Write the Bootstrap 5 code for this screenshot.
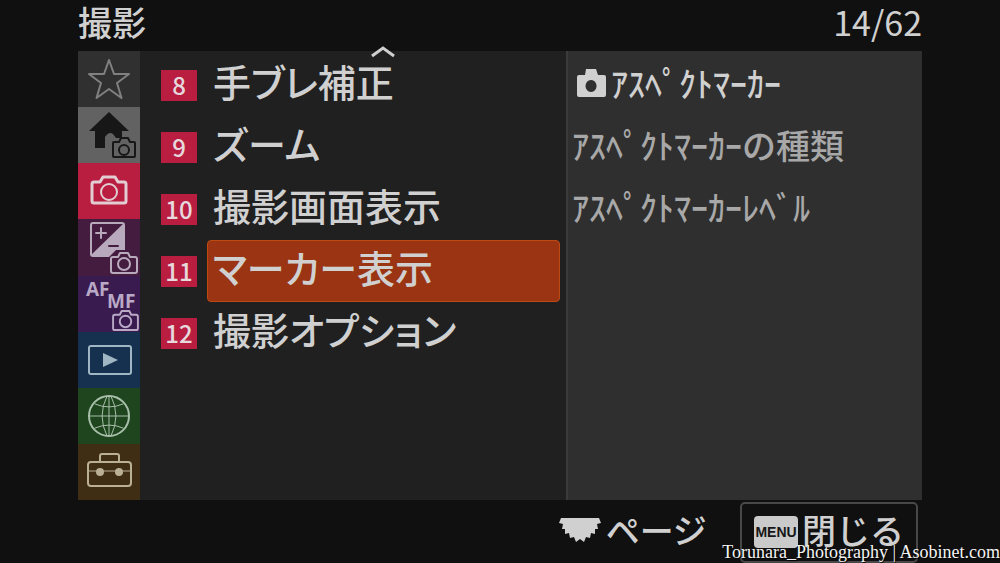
<!DOCTYPE html>
<html lang="ja">
<head>
<meta charset="utf-8">
<meta name="viewport" content="width=device-width, initial-scale=1">
<title>撮影</title>
<link href="https://cdn.jsdelivr.net/npm/bootstrap@5.3.0/dist/css/bootstrap.min.css" rel="stylesheet">
<style>
body{background:#101010;color:#d0d0d0;font-family:"Noto Sans CJK JP",sans-serif;line-height:1}
.frame{width:84.4%}
.topbar{height:51px;padding-bottom:8px}
.topbar h1,.pager{font-size:34px;line-height:44px}
.pane{background:#202020}
.tabs{width:62px}
.tabs a{flex:1 1 56px;color:#c3b5d0}
.tabs svg{width:62px;height:56px;fill:none;stroke:currentColor;stroke-width:2;stroke-linejoin:round;stroke-linecap:round}
.tabs text{font:700 19px "Open Sans",sans-serif;fill:currentColor;stroke:none}
.tabs .t-star{background:#303030;color:#808080}
.tabs .t-home{background:#626262;color:#171717}
.tabs .t-shoot{background:#b91e41;color:#e2cdd2}
.tabs .t-expo{background:#431c40;color:#b9a9bd}
.tabs .t-focus{background:#3a1b50;color:#b9a9c6}
.tabs .t-play{background:#16304f;color:#a0b6c2}
.tabs .t-net{background:#1f451f;color:#a8bfaa}
.tabs .t-setup{background:#3f2d14;color:#b9b096}
.groups{width:426px;padding:3px 6px 0 21px}
.group-row{height:62px;gap:10px}
.num{width:36px;height:31px;background:#b91e41;color:#e6d8dc;font-size:24px;font-weight:500;line-height:30px}
.entry{height:62px;padding:0 0 8px 5px;border:1px solid transparent;border-radius:4px;color:inherit;font-size:38px;font-weight:500;line-height:52px;font-feature-settings:"palt";background:none}
.entry.active{background:#9a3412;border-color:#bd4a12}
.scroll-up{top:-6px;left:66px;right:6px;height:14px}
.items{background:#2f2f2f;border-left:2px solid #3b3b3b;padding:3px 4px 0}
.item-row{height:62px;font-size:34px;font-weight:500;line-height:58px;padding-bottom:4px;color:#a8a8a8}
.item-row.on{color:#d0d0d0}
.foot{height:63px;font-size:34px;font-weight:500}
.foot .hint{padding:0 0 4px;line-height:44px;font-feature-settings:"palt"}
.close-btn{width:178px;height:61px;margin:1px 4px 0 34px;border:2px solid #484848;border-radius:5px;background:none;color:#d0d0d0;font-weight:500;line-height:40px}
.close-btn .label{padding-bottom:4px}
.menu-key{width:44px;height:32px;border-radius:4px;background:#cacaca;color:#161616;font:700 14px/32px "Liberation Sans",sans-serif}
.credit{right:0;bottom:1px;color:#f4f4f4;font:18px/20px "Liberation Serif",serif;text-shadow:1px 1px 1px #000}
</style>
</head>
<body class="min-vh-100 d-flex flex-column align-items-center position-relative">
<svg class="d-none" aria-hidden="true">
  <symbol id="cam" viewBox="0 0 38 30"><path stroke-width="3" d="M4 7H10L13 2H25L28 7H34Q36 7 36 9V26Q36 28 34 28H4Q2 28 2 26V9Q2 7 4 7Z"/><circle cx="19" cy="17" r="8"/></symbol>
  <symbol id="cam-s" viewBox="0 0 28 22"><path d="M3 5H8L10 1H18L20 5H25Q27 5 27 7V19Q27 21 25 21H3Q1 21 1 19V7Q1 5 3 5Z"/><circle cx="14" cy="12" r="6"/></symbol>
</svg>
<header class="frame topbar d-flex justify-content-between align-items-center">
  <h1 class="m-0 fw-medium">撮影</h1>
  <span class="pager">14/62</span>
</header>
<main class="frame d-flex flex-grow-1">
  <nav class="tabs d-flex flex-column flex-shrink-0" aria-label="メニュー">
    <a href="#" class="t-star" aria-label="マイメニュー"><svg viewBox="0 0 62 56"><path d="M31 9L36 23H51L39 32L43.500 47L31 38L18.500 47L23 32L11 23H26Z"/></svg></a>
    <a href="#" class="t-home" aria-label="メイン"><svg viewBox="0 0 62 56"><path d="M31 5L51 24H44V31H38L35 27Q31 24 27 30V41H17V24H11Z" fill="currentColor" stroke="none"/><path d="M36 35H41L43 31H50L52 35H56Q57 35 57 36V49Q57 50 56 50H36Q35 50 35 49V36Q35 35 36 35Z"/><circle cx="46" cy="43" r="5"/></svg></a>
    <a href="#" class="t-shoot" aria-label="撮影"><svg viewBox="0 0 62 56"><use href="#cam" x="12" y="12" width="38" height="30"/></svg></a>
    <a href="#" class="t-expo" aria-label="露出/色"><svg viewBox="0 0 62 56"><path d="M46 4L13 36H46Z" fill="currentColor" stroke="none"/><rect x="13" y="4" width="33" height="33" rx="2"/><path d="M18 14H28M23 9V19"/><path d="M31 27H40" stroke="#431c40"/><path d="M30 39L38 31H54L60 38V56H30Z" fill="#431c40" stroke="none"/><use href="#cam-s" x="32" y="33" width="28" height="22"/></svg></a>
    <a href="#" class="t-focus" aria-label="フォーカス"><svg viewBox="0 0 62 56"><text x="8" y="20">AF</text><text x="29" y="32">MF</text><use href="#cam-s" x="34" y="34" width="27" height="21"/></svg></a>
    <a href="#" class="t-play" aria-label="再生"><svg viewBox="0 0 62 56"><rect x="11" y="14" width="42" height="28" rx="2"/><path d="M25 21L40 28L25 35Z" fill="currentColor" stroke="none"/></svg></a>
    <a href="#" class="t-net" aria-label="ネットワーク"><svg viewBox="0 0 62 56"><circle cx="31" cy="28" r="20"/><path d="M31 8V48M11 28H51M17 16Q31 22 45 16M17 40Q31 34 45 40M29 8Q19 28 29 48M33 8Q43 28 33 48" stroke-width="1"/></svg></a>
    <a href="#" class="t-setup" aria-label="セットアップ"><svg viewBox="0 0 62 56"><rect x="10" y="18" width="43" height="24" rx="3"/><path d="M22 17V12Q22 10 24 10H39Q41 10 41 12V17"/><path d="M11 27H52" stroke-width="1"/><circle cx="22" cy="28" r="4" fill="currentColor" stroke="none"/><circle cx="41" cy="28" r="4" fill="currentColor" stroke="none"/></svg></a>
  </nav>
  <section class="pane groups position-relative flex-shrink-0">
    <button type="button" class="scroll-up position-absolute border-0 bg-transparent p-0 d-flex justify-content-center" aria-label="上へ"><svg width="24" height="14" viewBox="0 0 24 14" fill="none" stroke="#d0d0d0" stroke-width="3"><path d="M1 11L12 3L23 11"/></svg></button>
    <div class="group-row d-flex align-items-center"><span class="num text-center">8</span><button type="button" class="entry flex-grow-1 text-start">手ブレ補正</button></div>
    <div class="group-row d-flex align-items-center"><span class="num text-center">9</span><button type="button" class="entry flex-grow-1 text-start">ズーム</button></div>
    <div class="group-row d-flex align-items-center"><span class="num text-center">10</span><button type="button" class="entry flex-grow-1 text-start">撮影画面表示</button></div>
    <div class="group-row d-flex align-items-center"><span class="num text-center">11</span><button type="button" class="entry active flex-grow-1 text-start">マーカー表示</button></div>
    <div class="group-row d-flex align-items-center"><span class="num text-center">12</span><button type="button" class="entry flex-grow-1 text-start">撮影オプション</button></div>
  </section>
  <section class="items flex-grow-1">
    <div class="item-row on d-flex align-items-center"><svg class="ms-1 me-1" width="31" height="30" viewBox="0 0 31 30" aria-hidden="true"><path fill="currentColor" fill-rule="evenodd" d="M10 1H20L22 7H28Q30 7 30 9V27Q30 29 28 29H3Q1 29 1 27V9Q1 7 3 7H9ZM15 12A5.500 6 0 1 0 15.100 12Z"/></svg><span>ｱｽﾍﾟｸﾄﾏｰｶｰ</span></div>
    <div class="item-row">ｱｽﾍﾟｸﾄﾏｰｶｰの種類</div>
    <div class="item-row">ｱｽﾍﾟｸﾄﾏｰｶｰﾚﾍﾞﾙ</div>
  </section>
</main>
<footer class="frame foot d-flex justify-content-end align-items-center">
  <span class="hint d-flex align-items-center"><svg class="me-1" width="42" height="26" viewBox="0 0 42 26" aria-hidden="true"><path fill="#d0d0d0" d="M2 1H40L42 6L38 7L39 12L36 12L36 17L32 16L31 21L27 20L25 25L21 22L17 25L15 20L11 21L10 16L6 17L6 12L3 12L4 7L0 6Z"/></svg>ページ</span>
  <button type="button" class="close-btn d-flex align-items-center justify-content-center p-0"><span class="menu-key me-1">MENU</span><span class="label">閉じる</span></button>
</footer>
<div class="credit position-absolute text-nowrap">Torunara_Photography | Asobinet.com</div>
<script src="https://cdn.jsdelivr.net/npm/bootstrap@5.3.0/dist/js/bootstrap.bundle.min.js"></script>
</body>
</html>
